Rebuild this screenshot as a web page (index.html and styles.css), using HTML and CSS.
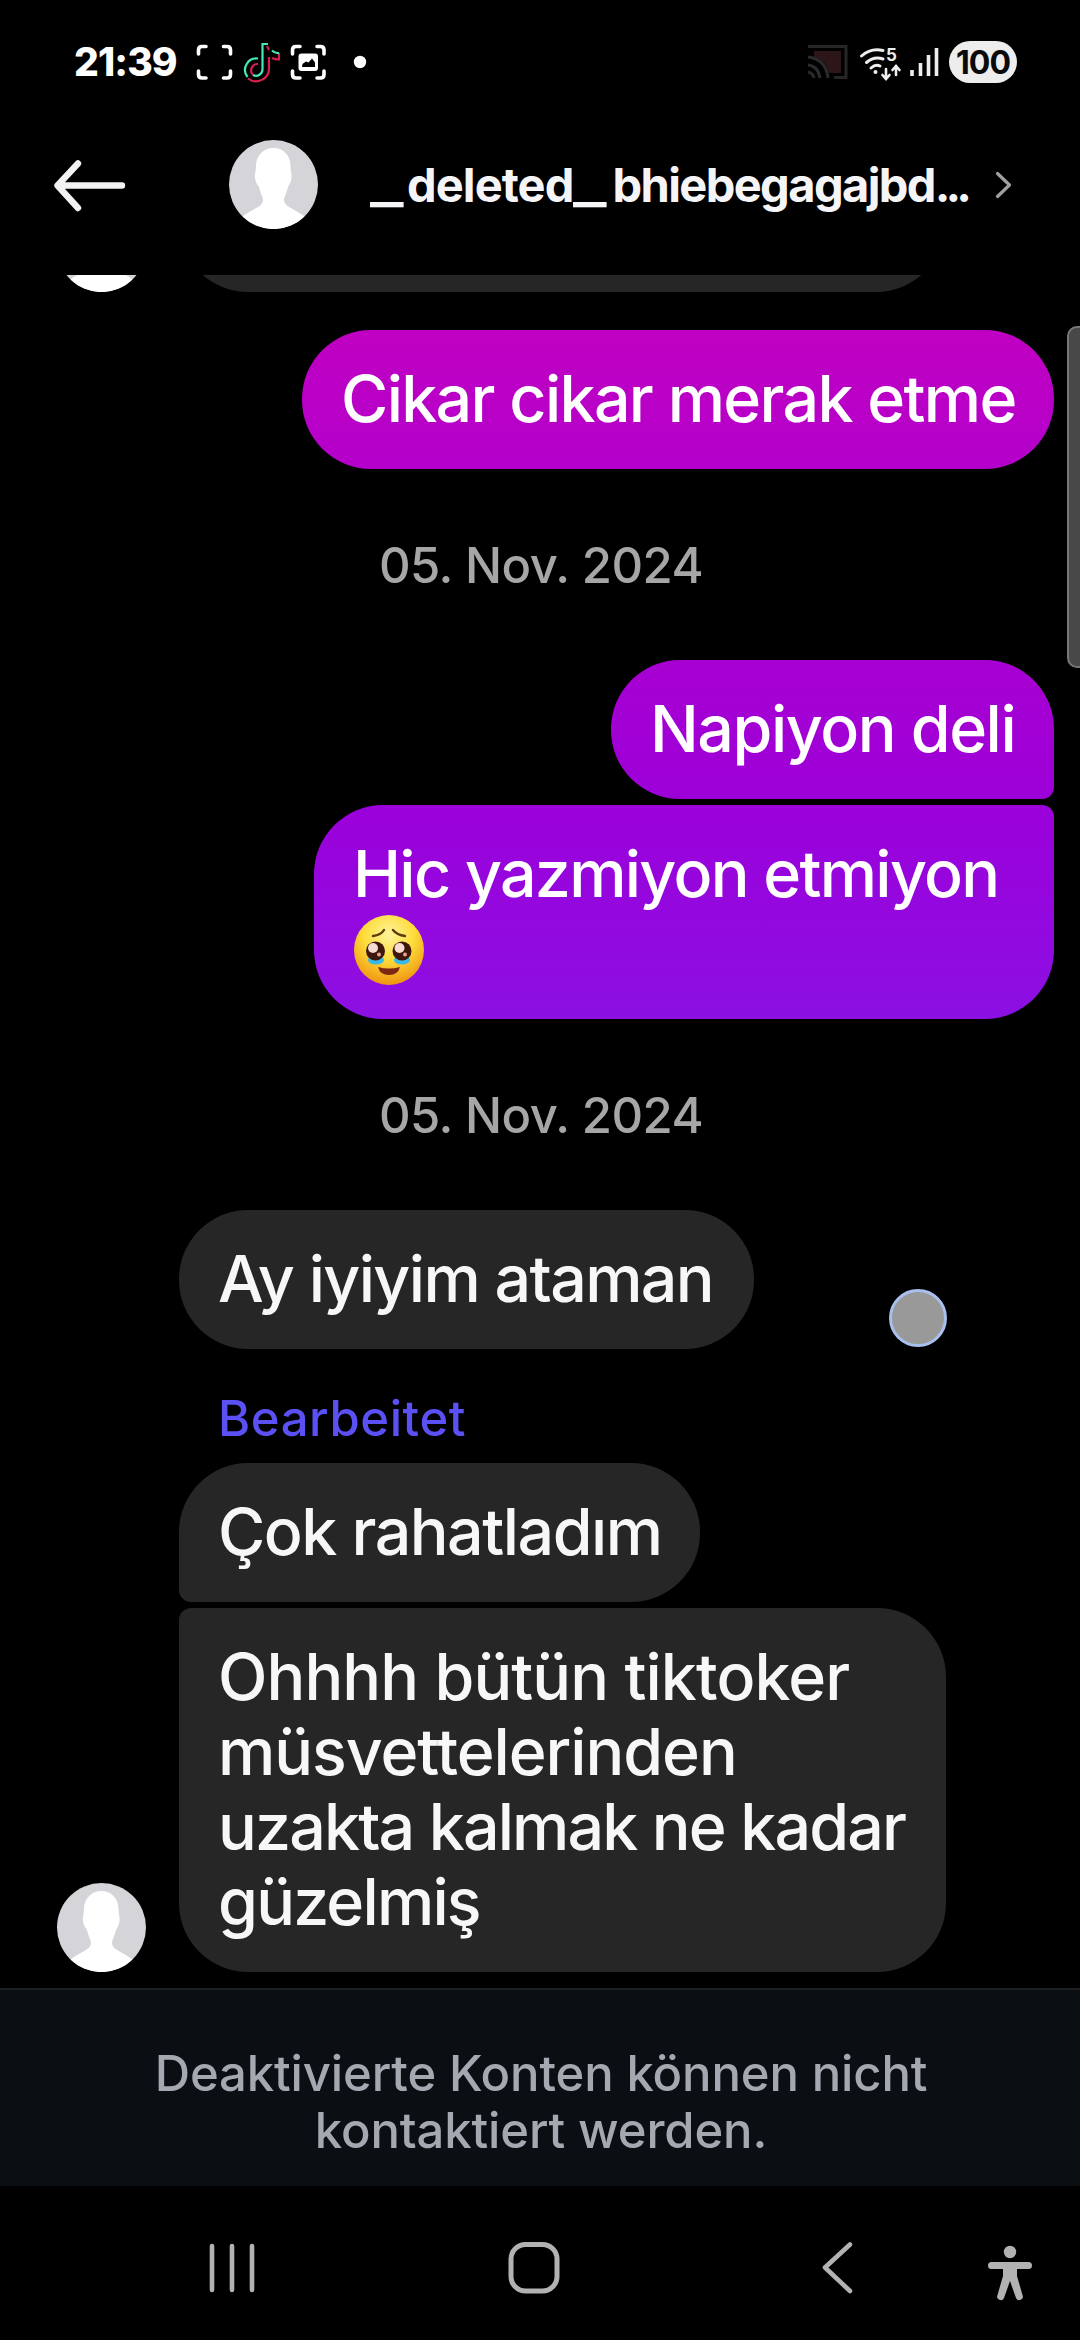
FILE: index.html
```html
<!DOCTYPE html>
<html lang="de">
<head>
<meta charset="utf-8">
<title>Chat</title>
<link rel="stylesheet" href="styles.css">
</head>
<body>
<svg width="0" height="0" class="defs">
  <defs>
    <symbol id="person" viewBox="0 0 89 89">
      <circle cx="44.5" cy="44.5" r="44.5" fill="#d5d5d9"/>
      <path d="M44.5 8C54 8 61.500 15 61.500 26C61.500 31 63 34 62.500 38C62 42 60.500 44 59 47C57.500 53 55 57 55 60C55 67 66 69 75.500 76.500A44.500 44.500 0 0 1 13.500 76.500C23 69 34 67 34 60C34 57 31 52 30 47C28 44 26.500 42 26 38C25.500 34 27 31 27 26C27 15 35 8 44.500 8Z" fill="#fff"/>
    </symbol>
  </defs>
</svg>
<div class="screen">
  <header class="status">
    <span class="clock">21:39</span>
    <svg class="status-left" width="180" height="56" viewBox="190 34 180 56">
      <g fill="none" stroke="#fff" stroke-width="3.6" stroke-linecap="round">
        <path d="M198.500 54V50Q198.500 46.500 202 46.500H206M223.500 46.500H227Q230.500 46.500 230.500 50V54M230.500 71V74.500Q230.500 78 227 78H223.500M206 78H202Q198.500 78 198.500 74.500V71"/>
        <path d="M292.500 54V50Q292.500 46.500 296 46.500H300M317 46.500H320.500Q324 46.500 324 50V54M324 71V74.500Q324 78 320.500 78H317M300 78H296Q292.500 78 292.500 74.500V71"/>
      </g>
      <rect x="298.500" y="53.500" width="19.500" height="17.500" rx="3" fill="#fff"/>
      <path d="M302 67L302.500 64L306 61.500L308.500 62.500L312 58.500L315 62.500V67Z" fill="#000"/>
      <g fill="none" stroke-width="2.200">
        <path d="M269 57V68A13 13 0 0 1 248 78.500M258 64A6.500 6.500 0 0 0 253 75M279 53V59.500Q275 59.500 272 58M267 46L269 50" stroke="#d3204f"/>
        <path d="M268 44H262.500V69A6.500 6.500 0 0 1 253 75M258 58.500A11.500 11.500 0 0 0 247.500 77M272 50.500Q275 53.500 279 53" stroke="#45e8b8"/>
      </g>
      <circle cx="360" cy="62" r="6.200" fill="#fff"/>
    </svg>
    <svg class="status-right" width="140" height="56" viewBox="806 34 140 56">
      <path d="M808 46.500H846V77.500H834" fill="none" stroke="#262628" stroke-width="3"/>
      <path d="M814 51H841V73H829Q826 60 814 57Z" fill="#2c1619"/>
      <g fill="none" stroke="#2b2b2e" stroke-width="3"><path d="M808 57Q826 59 828 78M808 65Q818 66 820 78M808 72Q813 73 814 78"/></g>
      <g fill="none" stroke="#eee" stroke-width="3" stroke-linecap="round">
        <path d="M861.500 56Q871 47.500 883 50.500M866.500 62.500Q874 56 883 59M871 68Q875.500 64 880 66"/>
        <path d="M886 69V78M882.500 75L886 79L889.500 75M896 75V67M892.500 70L896 66L899.500 70" stroke-width="2.600"/>
      </g>
      <circle cx="875.500" cy="72" r="2" fill="#eee"/>
      <text x="886" y="61" class="wifi-band">5</text>
      <path d="M912 70V76M920.500 63V76M928.500 55V76M936.500 48V76" stroke="#eee" stroke-width="3.600"/>
    </svg>
    <span class="battery">100</span>
  </header>

  <div class="topbar">
    <svg class="back" width="76" height="60" viewBox="52 155 76 60"><path d="M122 185.500H58M78 163.500L57.500 185.500L78 208" fill="none" stroke="#f3f3f5" stroke-width="6.400" stroke-linecap="round" stroke-linejoin="round"/></svg>
    <svg class="avatar" viewBox="0 0 89 89"><use href="#person"/></svg>
    <h1 class="name"><span class="bar">_</span>deleted<span class="bar">_</span><span class="tail">bhiebegagajbd</span><span class="dots">...</span></h1>
    <svg class="chevron" width="20" height="32" viewBox="994 169 20 32"><path d="M997.500 173.500L1009.500 185L997.500 196.500" fill="none" stroke="#a0a0a3" stroke-width="3.200" stroke-linecap="round" stroke-linejoin="round"/></svg>
  </div>

  <main class="thread">
    <div class="clipped">
      <svg class="avatar" viewBox="0 0 89 89"><use href="#person"/></svg>
      <div class="bubble in w-prev"></div>
    </div>
    <div class="bubble out w1">Cikar cikar merak etme</div>
    <time class="date">05. Nov. 2024</time>
    <div class="bubble out group-top w2">Napiyon deli</div>
    <div class="bubble out group-end w3">Hic yazmiyon etmiyon<br><svg class="emoji" width="70" height="70" viewBox="0 0 70 70">
      <defs><radialGradient id="face" cx=".5" cy=".28" r=".72"><stop offset="0" stop-color="#fff39a"/><stop offset=".5" stop-color="#fddc3a"/><stop offset="1" stop-color="#ef9410"/></radialGradient></defs>
      <circle cx="35" cy="35" r="35" fill="url(#face)"/>
      <path d="M19 21Q27 20 30 15M39 15Q43 20 51 21" fill="none" stroke="#5b3a0c" stroke-width="2.400" stroke-linecap="round"/>
      <ellipse cx="22" cy="45" rx="8" ry="4.500" fill="#39b8ea"/><ellipse cx="48" cy="45" rx="8" ry="4.500" fill="#39b8ea"/>
      <circle cx="21.500" cy="36" r="9.500" fill="#3d170c"/><circle cx="48" cy="36" r="9.500" fill="#3d170c"/>
      <circle cx="19" cy="33" r="5" fill="#f6dcd4"/><circle cx="45.500" cy="33" r="5" fill="#f6dcd4"/>
      <circle cx="25" cy="39.500" r="2" fill="#e8a090"/><circle cx="51" cy="39.500" r="2" fill="#e8a090"/>
      <path d="M24 52Q35 55 46 52Q44 60 35 60Q26 60 24 52Z" fill="#7c2712"/>
    </svg></div>
    <time class="date">05. Nov. 2024</time>
    <div class="bubble in w4">Ay iyiyim ataman</div>
    <div class="edited">Bearbeitet</div>
    <div class="bubble in group-top w5">Çok rahatladım</div>
    <div class="last-row">
      <svg class="avatar" viewBox="0 0 89 89"><use href="#person"/></svg>
      <div class="bubble in group-end w6"><span class="l1">Ohhhh bütün tiktoker</span><br><span class="l2">müsvettelerinden</span><br><span class="l3">uzakta kalmak ne kadar</span><br><span class="l4">güzelmiş</span></div>
    </div>
    <div class="scrollbar"></div>
    <div class="touch"></div>
  </main>

  <footer class="notice">Deaktivierte Konten können nicht<br>kontaktiert werden.</footer>

  <nav class="navbar">
    <svg width="1080" height="154" viewBox="0 2186 1080 154">
      <g fill="none" stroke="#b2b2b2" stroke-linecap="round" stroke-linejoin="round">
        <path d="M212 2246V2290M232 2246V2290M252 2246V2290" stroke-width="4.600"/>
        <rect x="511" y="2244.500" width="46" height="46.500" rx="14.500" stroke-width="5"/>
        <path d="M850 2244.500L825 2267.500L850 2291" stroke-width="4.600"/>
      </g>
      <g fill="#b2b2b2">
        <circle cx="1010" cy="2252" r="6.200"/>
        <path d="M991.500 2262H1028.500A3.500 3.500 0 0 1 1028.500 2269H1017V2276L1022.500 2295A3.300 3.300 0 0 1 1016 2298L1010 2281L1004 2298A3.300 3.300 0 0 1 997.500 2295L1003 2276V2269H991.500A3.500 3.500 0 0 1 991.500 2262Z"/>
      </g>
    </svg>
  </nav>
</div>
</body>
</html>
```
FILE: styles.css
```css
* { box-sizing: border-box; }
body { margin: 0; background: #000; font-family: Inter, Roboto, "Liberation Sans", sans-serif; }
svg { display: block; flex: none; }
.defs { position: absolute; }
.screen { width: 1080px; height: 2340px; background: #000; display: flex; flex-direction: column; overflow: hidden; }

.status { height: 124px; display: flex; align-items: center; padding-left: 74px; flex: none; }
.clock { width: 116px; color: #fff; font-size: 39px; font-weight: 800; line-height: 56px; letter-spacing: -0.9px; }
.status-right { margin-left: 436px; }
.battery { margin-left: 3px; width: 68px; height: 42px; border-radius: 21px; background: #ededed; color: #0a0a0a; font-size: 32px; font-weight: 700; line-height: 43px; text-align: center; letter-spacing: -1px; }
.wifi-band { font-size: 17px; font-weight: 700; fill: #eee; }

.topbar { height: 151px; flex: none; display: flex; align-items: center; padding: 0 0 30px 52px; }
.avatar { width: 89px; height: 89px; }
.topbar .avatar { margin-left: 101px; }
.name { flex: none; margin: 0 0 0 52px; width: 624px; color: #f5f5f7; font-size: 47px; font-weight: 700; line-height: 60px; white-space: nowrap; letter-spacing: -0.9px; }
.bar { display: inline-block; width: 37px; transform: scaleX(1.5); transform-origin: left; }
.name .bar + .tail { margin-left: 2px; }
.tail { letter-spacing: -1.6px; }
.dots { letter-spacing: -5px; }

.thread { position: relative; height: 1713px; flex: none; display: flex; flex-direction: column; }
.clipped { height: 17px; overflow: hidden; display: flex; align-items: flex-end; padding-left: 57px; gap: 33px; }
.bubble { color: #fff; font-size: 64.5px; font-weight: 500; line-height: 75px; padding: 32px 0 32px 39px; border-radius: 69px; white-space: nowrap; flex: none; }
.out { align-self: flex-end; margin-right: 26px; }
.in { background: #262626; color: #f7f7f7; margin-left: 179px; align-self: flex-start; }
.clipped .in, .last-row .in { margin-left: 0; }
.w-prev { width: 766px; height: 139px; align-self: flex-end; }
.w1 { width: 752px; margin-top: 38px; background: linear-gradient(#c000c2, #b400cb); letter-spacing: -1.67px; }
.w2 { width: 443px; background: linear-gradient(#a800d2, #9c00d8); letter-spacing: -1.45px; }
.w3 { width: 740px; height: 214px; margin-top: 6px; background: linear-gradient(#9b00da, #8c10e2); letter-spacing: -1.7px; }
.w4 { width: 575px; letter-spacing: -1.65px; }
.w5 { width: 521px; letter-spacing: -1.5px; }
.w6 { width: 767px; }
.l1 { letter-spacing: -0.9px; }
.l2 { letter-spacing: -1.05px; }
.l3 { letter-spacing: -1.85px; }
.l4 { letter-spacing: -1.8px; }
.out.group-top { border-bottom-right-radius: 12px; }
.out.group-end { border-top-right-radius: 12px; }
.in.group-top { border-bottom-left-radius: 12px; }
.in.group-end { border-top-left-radius: 12px; }
.emoji { margin-top: 3px; margin-left: 1px; }
.date { height: 191px; line-height: 193px; padding-left: 2px; text-align: center; color: #a6a6a6; font-size: 49px; font-weight: 500; letter-spacing: -0.5px; flex: none; }
.edited { height: 114px; padding-left: 218px; line-height: 140px; color: #5a50f4; font-size: 49px; font-weight: 500; letter-spacing: 0.6px; flex: none; }
.last-row { display: flex; align-items: flex-end; padding-left: 57px; gap: 33px; margin-top: 6px; }
.scrollbar { position: absolute; left: 1067px; top: 51px; width: 24px; height: 342px; border: 2px solid #777; border-radius: 10px; background: #484848; }
.touch { position: absolute; left: 889px; top: 1014px; width: 58px; height: 58px; border-radius: 50%; background: #999; border: 3px solid #a9c0ee; }

.notice { height: 198px; flex: none; background: #0b0f13; border-top: 2px solid #1d2124; padding: 55px 0 0 2px; text-align: center; color: #a5a8b0; font-size: 49px; font-weight: 500; line-height: 57px; letter-spacing: -0.13px; }
.navbar { height: 154px; flex: none; }
```
